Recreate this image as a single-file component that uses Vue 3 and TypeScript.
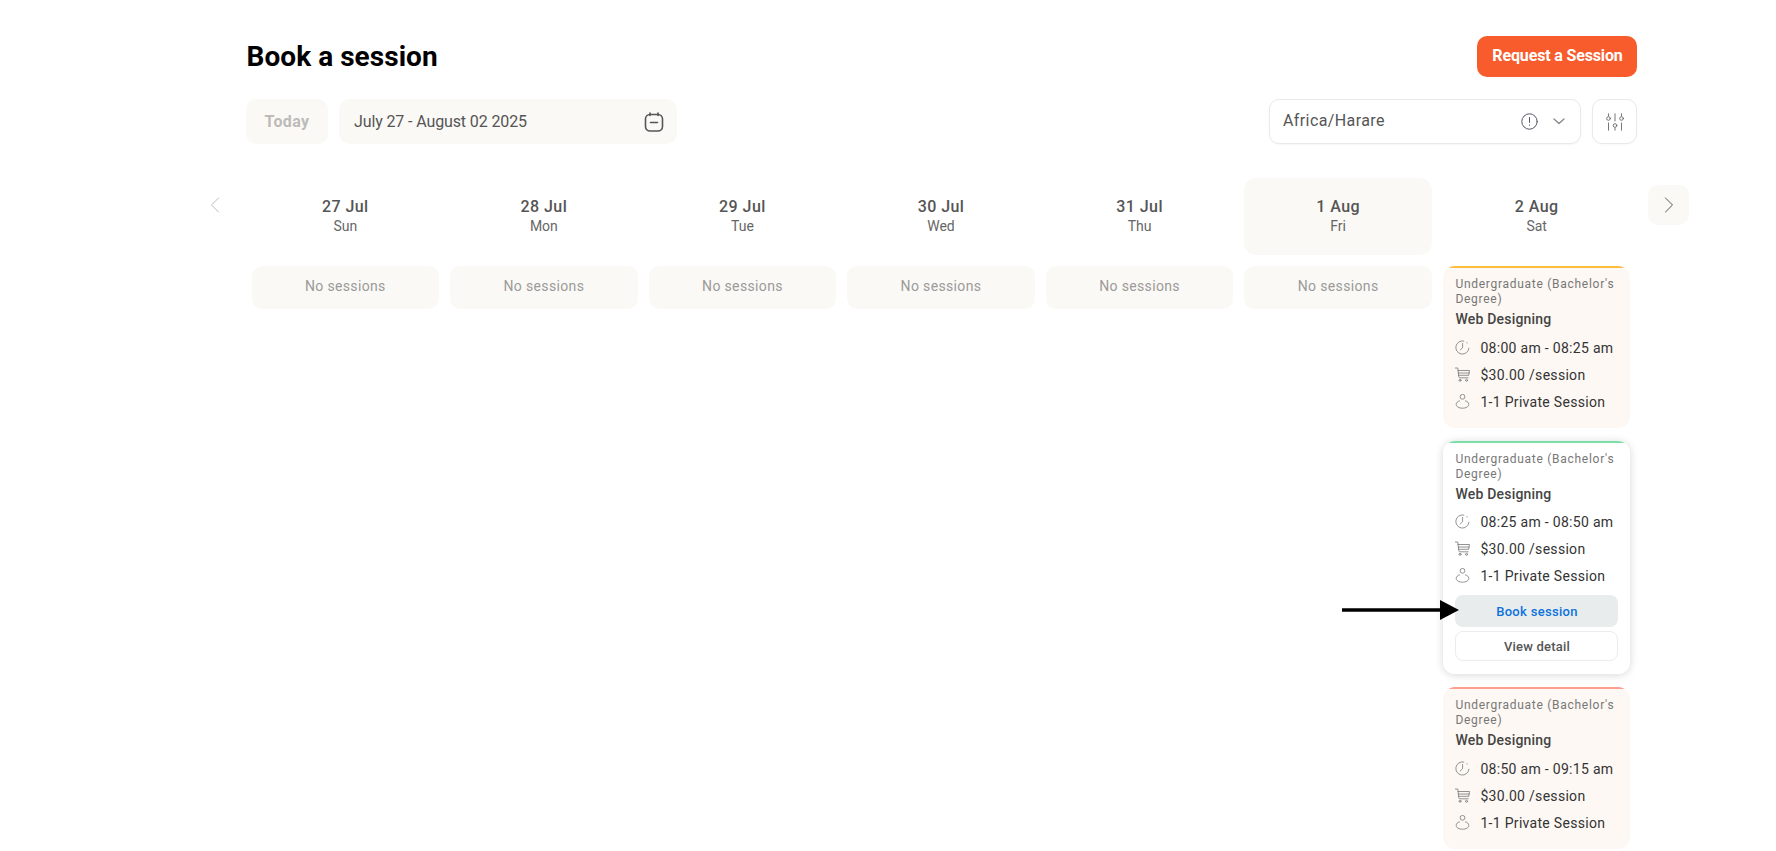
<script setup lang="ts">
interface Day { date: string; name: string; active?: boolean }
interface Session { time: string; accent: string; open?: boolean }

const days: Day[] = [
  { date: '27 Jul', name: 'Sun' },
  { date: '28 Jul', name: 'Mon' },
  { date: '29 Jul', name: 'Tue' },
  { date: '30 Jul', name: 'Wed' },
  { date: '31 Jul', name: 'Thu' },
  { date: '1 Aug', name: 'Fri', active: true },
  { date: '2 Aug', name: 'Sat' },
]

const sessions: Session[] = [
  { time: '08:00 am - 08:25 am', accent: '#ffbd3e' },
  { time: '08:25 am - 08:50 am', accent: '#7bdfa6', open: true },
  { time: '08:50 am - 09:15 am', accent: '#ff9d90' },
]
</script>

<template>
  <div class="page">
    <header class="top">
      <h1>Book a session</h1>
      <button class="request">Request a Session</button>
    </header>

    <div class="tools">
      <div class="tools-left">
        <button class="today">Today</button>
        <div class="range">
          <span>July 27 - August 02 2025</span>
          <svg width="20" height="20" viewBox="0 0 20 20" fill="none" stroke="#555" stroke-width="1.6" stroke-linecap="round">
            <rect x="1.500" y="2.500" width="17" height="16.500" rx="4.500" />
            <path d="M6 1v2.500M14 1v2.500M6.500 10.500h7" />
          </svg>
        </div>
      </div>
      <div class="tools-right">
        <div class="zone">
          <span class="zone-name">Africa/Harare</span>
          <svg class="info" width="17" height="17" viewBox="0 0 17 17" fill="none" stroke="#556" stroke-width="1" stroke-linecap="round">
            <circle cx="8.500" cy="8.500" r="7.700" />
            <path d="M8.500 4.500v5M8.500 12v.3" />
          </svg>
          <svg class="chev" width="12" height="7" viewBox="0 0 12 7" fill="none" stroke="#888" stroke-width="1.300" stroke-linecap="round" stroke-linejoin="round">
            <path d="M1 1l5 4.600L11 1" />
          </svg>
        </div>
        <button class="filter" aria-label="Filter">
          <svg width="18" height="18" viewBox="0 0 18 18" fill="none" stroke="#666" stroke-width="0.9" stroke-linecap="round">
            <path d="M2.500.8v2M2.500 10v7.200M9 .8v7.200M9 15v2.200M15.500.8v2M15.500 10v7.200" />
            <circle cx="2.500" cy="5.500" r="1.800" />
            <circle cx="9" cy="12.500" r="1.800" />
            <circle cx="15.500" cy="5.500" r="1.800" />
          </svg>
        </button>
      </div>
    </div>

    <div class="week">
      <button class="nav prev" aria-label="Previous">
        <svg width="10" height="16" viewBox="0 0 10 16" fill="none" stroke="#bbb" stroke-width="1" stroke-linecap="round" stroke-linejoin="round">
          <path d="M8.500 1L1.500 8l7 7" />
        </svg>
      </button>

      <section v-for="day in days" :key="day.date" class="col">
        <div class="head" :class="{ active: day.active }">
          <strong>{{ day.date }}</strong>
          <span>{{ day.name }}</span>
        </div>

        <div v-if="day.name !== 'Sat'" class="empty">No sessions</div>

        <div v-else class="stack">
          <article
            v-for="s in sessions"
            :key="s.time"
            class="card"
            :class="{ open: s.open }"
            :style="{ '--accent': s.accent }"
          >
            <p class="level">Undergraduate (Bachelor's Degree)</p>
            <h3>Web Designing</h3>
            <div class="row">
              <svg width="15" height="15" viewBox="0 0 15 15" fill="none" stroke="#777" stroke-width="0.8" stroke-linecap="round" stroke-linejoin="round">
                <path d="M8.800 1A6.600 6.600 0 1 0 14 8.200" />
                <path d="M7.600 3.500v4.200L5.200 10M11.800 2.600l.4.500" />
              </svg>
              <span>{{ s.time }}</span>
            </div>
            <div class="row">
              <svg width="15" height="15" viewBox="0 0 15 15" fill="none" stroke="#777" stroke-width="0.8" stroke-linecap="round" stroke-linejoin="round">
                <path d="M.3 1h2.500l1 8.800c.1.700.5 1 1.100 1h8.300" />
                <path d="M3 3.500h11.500l-.8 4.800H3.600M3.300 6h10.900" />
                <circle cx="5" cy="13.300" r="1" />
                <circle cx="11.500" cy="13.300" r="1" />
              </svg>
              <span>$30.00 /session</span>
            </div>
            <div class="row">
              <svg width="15" height="15" viewBox="0 0 15 15" fill="none" stroke="#777" stroke-width="0.8">
                <circle cx="7.500" cy="2.800" r="2.400" />
                <path d="M5 6.800C2.600 7.200 1.200 8.700 1.200 10.500c0 2.100 2.800 3.700 6.300 3.700s6.300-1.600 6.300-3.700c0-1.800-1.400-3.300-3.800-3.700" />
              </svg>
              <span>1-1 Private Session</span>
            </div>
            <template v-if="s.open">
              <button class="book">Book session</button>
              <button class="detail">View detail</button>
            </template>
          </article>
        </div>
      </section>

      <button class="nav next" aria-label="Next">
        <svg width="10" height="16" viewBox="0 0 10 16" fill="none" stroke="#555" stroke-width="1" stroke-linecap="round" stroke-linejoin="round">
          <path d="M1.500 1l7 7-7 7" />
        </svg>
      </button>
    </div>

    <svg class="pointer" width="118" height="20" viewBox="0 0 118 20" aria-hidden="true">
      <path d="M0 10h100" stroke="#000" stroke-width="3.500" />
      <path d="M98 0l19 10-19 10z" fill="#000" />
    </svg>
  </div>
</template>

<style>
html, body { margin: 0; overflow: hidden; background: #fff; }
</style>

<style scoped>
.page {
  position: relative;
  width: 1391px;
  height: 851px;
  margin-left: 246px;
  font-family: Roboto, "Liberation Sans", sans-serif;
  color: #555;
}
button { font-family: inherit; cursor: pointer; padding: 0; }
.top {
  display: flex;
  justify-content: space-between;
  align-items: center;
  padding-top: 36px;
  height: 41px;
}
h1 {
  margin: 0;
  padding-left: 0.5px;
  font-size: 28px;
  line-height: 40px;
  font-weight: 700;
  letter-spacing: 0.05px;
  color: #000;
}
.request {
  width: 160px;
  height: 41px;
  padding: 0 0 2px 1px;
  border: 0;
  border-radius: 10px;
  background: #f85c2c;
  color: #fff;
  font-size: 16px;
  letter-spacing: -0.15px;
  font-weight: 700;
}
.tools {
  display: flex;
  justify-content: space-between;
  margin-top: 22px;
}
.tools-left, .tools-right { display: flex; }
.today {
  width: 82px;
  height: 45px;
  border: 0;
  border-radius: 10px;
  background: #fbf9f5;
  color: #bdbbb8;
  font-size: 16px;
  letter-spacing: 0.4px;
  font-weight: 700;
}
.range {
  width: 338px;
  height: 45px;
  margin-left: 11px;
  padding: 0 13px 0 15px;
  box-sizing: border-box;
  display: flex;
  align-items: center;
  justify-content: space-between;
  border-radius: 10px;
  background: #fbf9f5;
  font-size: 16px;
  letter-spacing: -0.12px;
  color: #555;
}
.zone {
  width: 312px;
  height: 45px;
  padding: 0 15px 0 13px;
  box-sizing: border-box;
  display: flex;
  align-items: center;
  border: 1px solid #e9e9e9;
  border-radius: 10px;
  box-shadow: 0 1px 2px rgba(0, 0, 0, 0.04);
}
.zone-name {
  flex: 1;
  padding-bottom: 2px;
  font-size: 16px;
  letter-spacing: 0.4px;
  color: #555;
}
.info { margin-right: 15px; }
.filter {
  width: 45px;
  height: 45px;
  margin-left: 11px;
  display: flex;
  align-items: center;
  justify-content: center;
  background: #fff;
  border: 1px solid #e9e9e9;
  border-radius: 10px;
  box-shadow: 0 1px 2px rgba(0, 0, 0, 0.03);
}
.week {
  position: relative;
  display: grid;
  width: 1390px;
  grid-template-columns: repeat(7, 1fr);
  margin-top: 34px;
}
.col { padding: 0 5.5px; min-width: 0; }
.head {
  height: 77px;
  padding-top: 19px;
  box-sizing: border-box;
  display: flex;
  flex-direction: column;
  align-items: center;
  border-radius: 12px;
}
.head.active { background: #fbf9f5; }
.head strong {
  font-size: 16px;
  line-height: 19px;
  font-weight: 500;
  color: #555;
  letter-spacing: 0.45px;
}
.head span {
  font-size: 14px;
  line-height: 20px;
  color: #666;
}
.empty {
  margin-top: 11px;
  height: 43px;
  padding-bottom: 3px;
  box-sizing: border-box;
  display: flex;
  align-items: center;
  justify-content: center;
  border-radius: 10px;
  background: #fbf9f5;
  color: #9a9a9a;
  font-size: 14px;
  letter-spacing: 0.35px;
}
.stack {
  margin-top: 11px;
  display: flex;
  flex-direction: column;
  gap: 13px;
}
.card {
  box-sizing: border-box;
  padding: 11px 12px 0 12.5px;
  min-height: 162px;
  border-radius: 12px;
  background: linear-gradient(var(--accent) 2px, #fdf8f3 2px);
}
.card.open {
  background: linear-gradient(var(--accent) 2px, #fff 2px);
  padding-bottom: 13px;
  box-shadow: 0 1px 8px rgba(0, 0, 0, 0.16);
}
.level {
  margin: 0;
  font-size: 12px;
  line-height: 15px;
  letter-spacing: 0.72px;
  color: #777;
}
h3 {
  margin: 2px 0 5px;
  font-size: 14px;
  line-height: 20px;
  font-weight: 500;
  letter-spacing: 0.2px;
  color: #444;
}
.open h3 { margin-bottom: 4px; }
.row {
  display: flex;
  align-items: center;
  gap: 10px;
  height: 27px;
  font-size: 14px;
  letter-spacing: 0.3px;
  color: #333;
}
.row svg { flex: none; }
.book, .detail {
  display: block;
  width: 100%;
  font-weight: 500;
  border-radius: 8px;
}
.book {
  height: 32px;
  margin-top: 6px;
  border: 0;
  background: #e8ecec;
  color: #0b72de;
  font-size: 13px;
  letter-spacing: 0.3px;
}
.detail {
  height: 30px;
  margin-top: 4px;
  background: #fff;
  border: 1px solid #ececec;
  color: #555;
  font-size: 13px;
  letter-spacing: 0.2px;
}
.nav {
  position: absolute;
  top: 7px;
  width: 41px;
  height: 40px;
  border: 0;
  display: flex;
  align-items: center;
  justify-content: center;
  border-radius: 10px;
  background: #fbf9f5;
}
.prev { left: -52px; background: transparent; }
.next { right: -53px; }
.pointer {
  position: absolute;
  left: 1096px;
  top: 600px;
}
</style>
